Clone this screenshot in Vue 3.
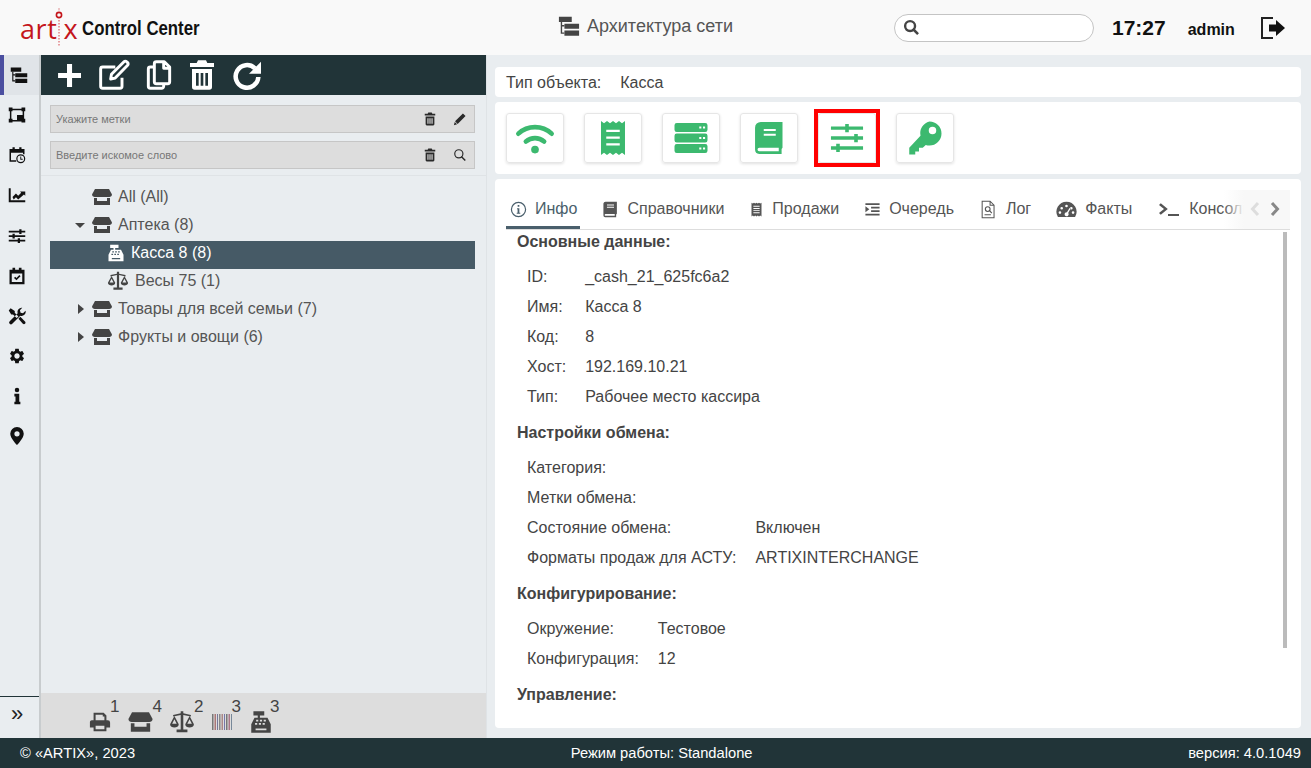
<template>
  <div class="page">
    <header class="top">
      <div class="brand">
        <div class="logo">
          <span class="logo-word">art</span>
          <svg class="logo-i" viewBox="0 0 12 40" width="12" height="40">
            <circle cx="6" cy="8" r="2.6" fill="none" stroke="#c4161c" stroke-width="1.6" />
            <line x1="6" y1="1" x2="6" y2="3.5" stroke="#e3a0a2" stroke-width="1.2" />
            <line x1="6" y1="13" x2="6" y2="39" stroke="#e07a7e" stroke-width="1.4" stroke-dasharray="1.5 1.5" />
          </svg>
          <span class="logo-word logo-x">x</span>
        </div>
        <span class="brand-name">Control Center</span>
      </div>
      <div class="page-title">
        <svg class="title-icon" viewBox="0 0 24 24" fill="currentColor" v-html="icons.tree"></svg>
        <span>Архитектура сети</span>
      </div>
      <div class="top-right">
        <div class="search">
          <svg viewBox="0 0 24 24" class="search-icon" v-html="icons.searchBold"></svg>
        </div>
        <span class="clock">17:27</span>
        <span class="user">admin</span>
        <svg class="exit" viewBox="0 0 26 24" v-html="icons.exit"></svg>
      </div>
    </header>

    <main class="main">
      <nav class="rail">
        <div class="rail-items">
          <div v-for="(item, i) in railItems" :key="item" class="rail-item" :class="{ active: i === 0 }">
            <svg viewBox="0 0 24 24" fill="currentColor" v-html="icons[item]"></svg>
          </div>
        </div>
        <div class="rail-toggle">»</div>
      </nav>

      <section class="tree-panel">
        <div class="toolbar">
          <svg v-for="item in toolbarItems" :key="item" viewBox="0 0 24 24" fill="currentColor" v-html="icons[item]"></svg>
        </div>
        <div class="filters">
          <div class="filter">
            <span>Укажите метки</span>
            <svg viewBox="0 0 24 24" fill="currentColor" v-html="icons.trash"></svg>
            <svg viewBox="0 0 24 24" fill="currentColor" v-html="icons.pencil"></svg>
          </div>
          <div class="filter">
            <span>Введите искомое слово</span>
            <svg viewBox="0 0 24 24" fill="currentColor" v-html="icons.trash"></svg>
            <svg viewBox="0 0 24 24" fill="currentColor" v-html="icons.searchThin"></svg>
          </div>
        </div>
        <ul class="tree">
          <li
            v-for="node in treeNodes"
            :key="node.label"
            class="tree-row"
            :class="[node.icon, { selected: node.selected, child: node.child }]"
          >
            <span v-if="!node.child" class="caret" :class="node.caret"></span>
            <svg viewBox="0 0 24 24" fill="currentColor" v-html="icons[node.icon]"></svg>
            <span>{{ node.label }}</span>
          </li>
        </ul>
        <div class="counters">
          <div v-for="c in counters" :key="c.icon" class="counter">
            <svg :style="{ width: c.w + 'px', marginRight: c.pull + 'px' }" viewBox="0 0 24 24" fill="currentColor" v-html="icons[c.icon]"></svg>
            <span>{{ c.count }}</span>
          </div>
        </div>
      </section>

      <section class="details">
        <div class="card type-card">
          <span>Тип объекта:</span>
          <span>Касса</span>
        </div>
        <div class="card tools">
          <div v-for="(tool, i) in tools" :key="tool" class="tool" :class="{ marked: i === 4 }">
            <svg viewBox="0 0 24 24" fill="currentColor" v-html="icons[tool]"></svg>
          </div>
        </div>
        <div class="card info-card">
          <div class="tabs">
            <div v-for="(tab, i) in tabs" :key="tab.label" class="tab" :class="{ active: i === 0 }">
              <svg :style="{ width: tab.w + 'px', height: tab.w + 'px' }" viewBox="0 0 24 24" fill="currentColor" v-html="icons[tab.icon]"></svg>
              <span>{{ tab.label }}</span>
            </div>
            <div class="tab-nav">
              <svg class="chev off" viewBox="0 0 10 16"><path d="M8 2L2.500 8 8 14" /></svg>
              <svg class="chev" viewBox="0 0 10 16"><path d="M2 2l5.500 6L2 14" /></svg>
            </div>
          </div>
          <div class="content">
            <div class="scrollbar"></div>
            <template v-for="group in groups" :key="group.title">
              <h3>{{ group.title }}</h3>
              <dl v-if="group.rows.length">
                <template v-for="row in group.rows" :key="row[0]">
                  <dt>{{ row[0] }}</dt>
                  <dd>{{ row[1] }}</dd>
                </template>
              </dl>
            </template>
          </div>
        </div>
      </section>
    </main>

    <footer class="bottom">
      <span>© «ARTIX», 2023</span>
      <span>Режим работы: Standalone</span>
      <span>версия: 4.0.1049</span>
    </footer>
  </div>
</template>

<script setup>
const icons = {
  tree: '<path d="M1 2h14v5.500H1zM7 9.500h16V15H7zM7 17h16v5.500H7z"/><path d="M3 7.500h1.500v3.500H7v1.500H4.500V19H7v1.500H3z"/>',
  frame: '<path fill-rule="evenodd" d="M1 2h5v1.500h12V2h5v5h-1.500v10H23v5h-5v-1.500H6V22H1v-5h1.500V7H1zm3.500 5v10H6v1.500h6V12h7.500V7H18V5.500H6V7z"/><path d="M14 14h5v4.500h-5z" opacity=".35"/>',
  calClock: '<path fill-rule="evenodd" d="M2 4h4V1.500h3V4h6V1.500h3V4h4v7h-2V9H4v10h7v2H2z"/><circle cx="17" cy="17" r="5.200" fill="none" stroke="currentColor" stroke-width="1.600"/><path d="M16.400 14h1.200v3h2v1.200h-3.200z"/>',
  chart: '<path d="M1 3h2.600v16H23v2.600H1z"/><path d="M6 14.500l4.600-4.600 3 3 4-4-1.600-1.600H23v5.800l-1.700-1.700-7.700 6.600-3-3-3 3z"/>',
  sliders: '<path d="M1 5h22v2.400H1zM1 11h22v2.400H1zM1 17h22v2.400H1z"/><path d="M15 3h3v6.400h-3zM6 9h3v6.400H6zM13 15h3v6.400h-3z"/>',
  calCheck: '<path fill-rule="evenodd" d="M6 1h3.500v2.500h5V1H18v2.500h4V23H2V3.500h4zM5 8.500v11.500h14V8.500zm4.600 4.400l1.700 1.700 3.800-3.800 1.600 1.600-5.400 5.400-3.300-3.300z"/>',
  tools: '<path d="M3.500 1.500l5.500 3.700v2.500l4.800 4.800-2.300 2.300-4.800-4.800H4.300L1 4.500zM19 1a5.500 5.500 0 0 0-6 7.300L2.300 19c-1.300 1.300-.9 2.500 0 3.400.9.900 2.100 1.200 3.400 0L16.400 11.600a5.500 5.500 0 0 0 7-6.600L20 8.400l-3.200-.9-.9-3.200z"/><path d="M14 15.500l2.400-2.400 6.300 6.300c.8.800.8 2.100 0 2.900s-2.100.8-2.900 0z"/>',
  gear: '<path fill-rule="evenodd" d="M19.140 12.940c.04-.3.06-.61.06-.94 0-.32-.02-.64-.07-.94l2.030-1.580c.18-.14.23-.41.12-.61l-1.920-3.320c-.12-.22-.37-.29-.59-.22l-2.390.96c-.5-.38-1.030-.7-1.620-.94l-.36-2.540c-.04-.24-.24-.41-.48-.41h-3.840c-.24 0-.43.17-.47.41l-.36 2.540c-.59.24-1.130.57-1.620.94l-2.390-.96c-.22-.08-.47 0-.59.22L2.740 8.870c-.12.21-.08.47.12.61l2.030 1.580c-.05.3-.09.63-.09.94s.02.64.07.94l-2.030 1.580c-.18.14-.23.41-.12.61l1.920 3.320c.12.22.37.29.59.22l2.390-.96c.5.38 1.030.7 1.620.94l.36 2.540c.05.24.24.41.48.41h3.840c.24 0 .44-.17.47-.41l.36-2.540c.59-.24 1.130-.56 1.620-.94l2.390.96c.22.08.47 0 .59-.22l1.920-3.320c.12-.22.07-.47-.12-.61l-2.010-1.580zM12 15.600c-1.980 0-3.600-1.620-3.600-3.600s1.620-3.600 3.600-3.600 3.600 1.620 3.600 3.600-1.620 3.600-3.600 3.600z"/>',
  infoI: '<circle cx="12" cy="4" r="3"/><path d="M8.500 9h6.500v10.500h1.500V23h-8v-3.500H10v-7H8.500z"/>',
  pin: '<path fill-rule="evenodd" d="M12 0a9 9 0 0 0-9 9c0 6 9 15 9 15s9-9 9-15a9 9 0 0 0-9-9zm0 5.500a3.500 3.500 0 1 1 0 7 3.500 3.500 0 0 1 0-7z"/>',
  plus: '<path d="M10.500 3.700h3.800v6.800H21v3.800h-6.700V21h-3.800v-6.700H3.800v-3.800h6.700z"/>',
  edit: '<path fill="none" stroke="currentColor" stroke-width="2.200" d="M18 14v6.500a1.500 1.500 0 0 1-1.500 1.500h-13A1.500 1.500 0 0 1 2 20.500v-13A1.500 1.500 0 0 1 3.500 6H13"/><path fill="none" stroke="currentColor" stroke-width="2.200" stroke-linejoin="round" d="M9.500 15l.6-3.500L19.500 2a1.400 1.400 0 0 1 2 0l.7.7a1.400 1.400 0 0 1 0 2l-9.300 9.600z"/>',
  copy: '<path fill="none" stroke="currentColor" stroke-width="2.200" stroke-linejoin="round" d="M10 2h6l4 4v11a1.500 1.500 0 0 1-1.500 1.500H10A1.500 1.500 0 0 1 8.500 17V3.500A1.500 1.500 0 0 1 10 2zM15.500 2v5H20M8.500 6H5.500A1.500 1.500 0 0 0 4 7.500v13A1.500 1.500 0 0 0 5.500 22H14a1.500 1.500 0 0 0 1.500-1.500v-2"/>',
  trash: '<path fill-rule="evenodd" d="M9 1h6l1 2h5v3H3V3h5zM4.500 7.500h15V21a2 2 0 0 1-2 2h-11a2 2 0 0 1-2-2zm3 3V20h2v-9.500zm3.500 0V20h2v-9.500zm3.500 0V20h2v-9.500z"/>',
  redo: '<path fill="none" stroke="currentColor" stroke-width="3.400" d="M18 7A8.500 8.500 0 1 0 20.500 13.500"/><path d="M22.500 2v9h-9z"/>',
  pencil: '<path d="M17 2.500l4.500 4.500L8 20.500l-4.500-4.500zM3 17l4 4-5.500 1.500z"/>',
  searchThin: '<circle cx="10" cy="10" r="7" fill="none" stroke="currentColor" stroke-width="2"/><path d="M15 13.500l7 7-1.800 1.800-7-7z"/>',
  searchBold: '<circle cx="10" cy="10" r="7" fill="none" stroke="#444" stroke-width="3.400"/><path fill="#444" d="M15 12.500l7.500 7.500-2.500 2.500-7.500-7.500z"/>',
  exit: '<path fill="none" stroke="#222" stroke-width="2" d="M13 2H2v20h11"/><path fill="#111" d="M9 8.500h7V4l9 8-9 8v-4.500H9z"/>',
  store: '<path d="M5 4h14l3 5.500c0 1.600-1.300 2.500-2.700 2.500H4.700C3.300 12 2 11.100 2 9.500z"/><path d="M4 13h3v3h10v-3h3v7H4z"/>',
  register: '<path fill-rule="evenodd" d="M5 2h10v4h-4v2h7l3 6v8H3v-8l3-6h3V6H5zM7.500 10v1.500h2V10zm3.500 0v1.500h2V10zm3.500 0v1.500h2V10zM6.500 13v1.500h2V13zm3.500 0v1.500h2V13zm3.500 0v1.500h2V13zM7 18v1.500h10V18z"/>',
  scale: '<path d="M10.800 2h2.400v2l7 1.500V7l-7-1.500V19H17v2.500H7V19h3.800V5.500L3.800 7V5.500l7-1.500z"/><path fill-rule="evenodd" d="M5 6.500l4 7.500c0 2-2 3-4 3s-4-1-4-3zm0 3L2.900 13.500h4.200zM19 6.500l4 7.500c0 2-2 3-4 3s-4-1-4-3zm0 3l-2.100 4h4.200z"/>',
  printer: '<path fill-rule="evenodd" d="M5 2h11l3 3v5h1.500A2.500 2.500 0 0 1 23 12.500V18h-4v4H5v-4H1v-6c0-1 1-2 2-2h2zm2.200 2.200V10h9.600V6H15V4.200zM7.200 16v3.800h9.600V16z"/>',
  barcode: '<path d="M2 4h1.500v16H2z" fill="#777"/><path d="M4.500 4H6v16H4.500z" fill="#a77"/><path d="M7 4h1v16H7z" fill="#779"/><path d="M9 4h1.500v16H9z" fill="#888"/><path d="M11.500 4H13v16h-1.500z" fill="#a88"/><path d="M14 4h1v16h-1z" fill="#77a"/><path d="M16 4h1.500v16H16z" fill="#777"/><path d="M18.500 4H20v16h-1.500z" fill="#a78"/><path d="M21 4h1v16h-1z" fill="#789"/>',
  wifi: '<g fill="none" stroke="currentColor" stroke-width="2.700" stroke-linecap="round"><path d="M2.500 9.500a14 14 0 0 1 19 0"/><path d="M6.800 14a8 8 0 0 1 10.400 0"/></g><circle cx="12" cy="18.600" r="2.200"/>',
  receipt: '<path fill-rule="evenodd" d="M4 .7l2 1.400L8 .7l2 1.400L12 .7l2 1.400L16 .7l2 1.400L20 .7v22.600l-2-1.400-2 1.400-2-1.400-2 1.400-2-1.400-2 1.400-2-1.400-2 1.400zM7.500 6.500V8h9V6.500zm0 4.500v1.500h9V11zm0 4.500V17h9v-1.500z"/>',
  server: '<path fill-rule="evenodd" d="M2.500 2h19A1.500 1.500 0 0 1 23 3.500v3A1.500 1.500 0 0 1 21.500 8h-19A1.500 1.500 0 0 1 1 6.500v-3A1.500 1.500 0 0 1 2.500 2zm15 2.300v1.400h1.400V4.300zm2.500 0v1.400h1.400V4.300zM2.500 9h19a1.500 1.500 0 0 1 1.500 1.500v3a1.500 1.500 0 0 1-1.500 1.500h-19A1.500 1.500 0 0 1 1 13.500v-3A1.500 1.500 0 0 1 2.500 9zm15 2.300v1.400h1.400v-1.400zm2.500 0v1.400h1.400v-1.400zM2.500 16h19a1.500 1.500 0 0 1 1.500 1.500v3a1.500 1.500 0 0 1-1.500 1.500h-19A1.500 1.500 0 0 1 1 20.500v-3A1.500 1.500 0 0 1 2.500 16zm15 2.300v1.400h1.400v-1.400zm2.500 0v1.400h1.400v-1.400z"/>',
  book: '<path fill-rule="evenodd" d="M6.500 1.300H21v17.200l-.6.8v3.400H5.500A3 3 0 0 1 2.700 19.700V5.100a3.800 3.800 0 0 1 3.800-3.800zM8.500 6v1.300h8V6zm0 3.200v1.300h8V9.200zM5.500 18.500a1.100 1.100 0 0 0 0 2.300h13v-2.300z"/>',
  slidersThin: '<path d="M1.300 4.250h21.400v2.200H1.300zM1.300 10.900h21.400v2.200H1.300zM1.300 17.550h21.400v2.200H1.300z"/><path d="M10.800 2.600h2.400v5.500h-2.400zM16.800 9.250h2.400v5.500h-2.400zM4.800 15.900h2.400v5.500H4.800z"/>',
  key: '<path fill-rule="evenodd" d="M15 1a8 8 0 0 1 0 16c-.9 0-1.700-.1-2.500-.4L10.500 18.500H8V21H5.500v2H1.500v-4.500l7.500-8A8 8 0 0 1 15 1zm2 3.500a2.500 2.500 0 1 0 0 5 2.500 2.500 0 0 0 0-5z"/>',
  infoCircle: '<circle cx="12" cy="12" r="10" fill="none" stroke="currentColor" stroke-width="1.700"/><path d="M10.800 5.800h2.400v2.400h-2.400zM10 10.200h3.200v6.400H14.500V18h-5v-1.400h1.200v-5H10z"/>',
  bookTab: '<path fill-rule="evenodd" d="M5 1h16v17l-1 1v4H4.500A2.500 2.500 0 0 1 2 20.500v-17A3 3 0 0 1 5 1zm2 4v1.500h10V5zm0 3v1.500h10V8zM5 18.500a1.200 1.200 0 0 0 0 2.400h13v-2.400z"/>',
  receiptTab: '<path fill-rule="evenodd" d="M4 1l2 1.500L8 1l2 1.500L12 1l2 1.500L16 1l2 1.500L20 1v22l-2-1.500-2 1.500-2-1.500-2 1.500-2-1.500L8 23l-2-1.500L4 23zM7 6v1.500h10V6zm0 3.500V11h10V9.500zm0 3.500v1.500h10V13zm0 3.500V18h10v-1.500z"/>',
  queue: '<path d="M2 3h20v2.600H2zM10 8h12v2.600H10zM10 13h12v2.600H10zM2 18h20v2.600H2zM2 7.500l5.500 4.200L2 16z"/>',
  log: '<path fill="none" stroke="currentColor" stroke-width="1.300" d="M4 1.500h10l5 5v16H4zM14 1.500v5h5"/><circle cx="11" cy="11.500" r="3" fill="none" stroke="currentColor" stroke-width="1.400"/><path d="M12.800 14l1.100-.9 2.800 3-1.100 1z"/><path d="M7 18h8v1.200H7z"/>',
  gauge: '<path fill-rule="evenodd" d="M12 3a11.500 11.500 0 0 1 9.800 17.500H2.200A11.500 11.500 0 0 1 12 3zM12 6.500a1.500 1.500 0 1 0 0 3 1.500 1.500 0 0 0 0-3zM6.500 9a1.500 1.500 0 1 0 0 3 1.500 1.500 0 0 0 0-3zM17.500 9a1.500 1.500 0 1 0 0 3 1.500 1.500 0 0 0 0-3zM4.500 14a1.500 1.500 0 1 0 0 3 1.500 1.500 0 0 0 0-3zM19.500 14a1.500 1.500 0 1 0 0 3 1.500 1.500 0 0 0 0-3zM15.500 10.200l-3 5a2.300 2.300 0 1 0 1.400.8l3-5.300z"/>',
  terminal: '<path d="M2 8l1.800-1.800 7 5.800-7 5.800L2 16l5-4z"/><path d="M11 17h11v2H11z"/>'
}

const railItems = ['tree', 'frame', 'calClock', 'chart', 'sliders', 'calCheck', 'tools', 'gear', 'infoI', 'pin']
const toolbarItems = ['plus', 'edit', 'copy', 'trash', 'redo']

const treeNodes = [
  { label: 'All (All)', icon: 'store', caret: 'none' },
  { label: 'Аптека (8)', icon: 'store', caret: 'down' },
  { label: 'Касса 8 (8)', icon: 'register', child: true, selected: true },
  { label: 'Весы 75 (1)', icon: 'scale', child: true },
  { label: 'Товары для всей семьи (7)', icon: 'store', caret: 'right' },
  { label: 'Фрукты и овощи (6)', icon: 'store', caret: 'right' }
]

const counters = [
  { icon: 'printer', count: 1, w: 22, pull: -1 },
  { icon: 'store', count: 4, w: 29, pull: -3 },
  { icon: 'scale', count: 2, w: 26, pull: -1 },
  { icon: 'barcode', count: 3, w: 24, pull: -3 },
  { icon: 'register', count: 3, w: 26, pull: -4 }
]

const tools = ['wifi', 'receipt', 'server', 'book', 'slidersThin', 'key']

const tabs = [
  { label: 'Инфо', icon: 'infoCircle', w: 17 },
  { label: 'Справочники', icon: 'bookTab', w: 17 },
  { label: 'Продажи', icon: 'receiptTab', w: 15 },
  { label: 'Очередь', icon: 'queue', w: 17 },
  { label: 'Лог', icon: 'log', w: 19 },
  { label: 'Факты', icon: 'gauge', w: 21 },
  { label: 'Консоль', icon: 'terminal', w: 24 }
]

const groups = [
  {
    title: 'Основные данные:',
    rows: [
      ['ID:', '_cash_21_625fc6a2'],
      ['Имя:', 'Касса 8'],
      ['Код:', '8'],
      ['Хост:', '192.169.10.21'],
      ['Тип:', 'Рабочее место кассира']
    ]
  },
  {
    title: 'Настройки обмена:',
    rows: [
      ['Категория:', ''],
      ['Метки обмена:', ''],
      ['Состояние обмена:', 'Включен'],
      ['Форматы продаж для АСТУ:', 'ARTIXINTERCHANGE']
    ]
  },
  {
    title: 'Конфигурирование:',
    rows: [
      ['Окружение:', 'Тестовое'],
      ['Конфигурация:', '12']
    ]
  },
  { title: 'Управление:', rows: [] }
]
</script>

<style>
html, body { margin: 0; height: 100%; overflow: hidden; }
</style>

<style scoped>
.page { width: 1311px; height: 768px; display: flex; flex-direction: column; font-family: "Liberation Sans", Arial, sans-serif; color: #444; background: #e9edf0; overflow: hidden; }

.top { height: 55px; flex: none; display: flex; align-items: center; background: #f9f9f9; }
.brand { display: flex; align-items: center; margin-left: 20px; width: 538px; }
.logo { display: flex; align-items: center; width: 62px; height: 50px; color: #c4161c; flex: none; }
.logo-word { font-family: "Open Sans", sans-serif; font-weight: 400; font-size: 27px; letter-spacing: .6px; line-height: 1; margin-top: 2px; }
.logo-i { flex: none; margin: -2px 0 0 -4px; }
.logo-x { margin-left: -2px; letter-spacing: 0; }
.brand-name { font-weight: 700; font-size: 21px; color: #111; transform: scaleX(.8); transform-origin: left center; white-space: nowrap; }
.page-title { display: flex; align-items: center; gap: 7px; width: 336px; font-size: 18px; color: #555; margin-top: -3px; }
.title-icon { width: 22px; height: 22px; color: #444; }
.top-right { display: flex; align-items: center; }
.search { width: 190px; height: 26px; border: 1px solid #c4c4c4; border-radius: 14px; background: #fff; display: flex; align-items: center; padding-left: 8px; }
.search-icon { width: 17px; height: 17px; }
.clock { font-weight: 700; font-size: 21px; color: #111; margin-left: 18px; }
.user { font-weight: 700; font-size: 16px; color: #111; margin-left: 22px; margin-top: 5px; }
.exit { width: 26px; height: 24px; margin-left: 25px; }

.main { flex: 1; display: flex; min-height: 0; }

.rail { width: 39px; flex: none; border-right: 2px solid #c8ccce; display: flex; flex-direction: column; justify-content: space-between; color: #111; }
.rail-item { height: 40.15px; display: flex; align-items: center; padding-left: 8px; box-sizing: border-box; }
.rail-item svg { width: 18px; height: 18px; }
.rail-item.active { background: #e0e4e8; border-left: 4px solid #4b4fa0; padding-left: 6px; }
.rail-toggle { height: 41px; border-top: 1px solid #213438; font-size: 22px; line-height: 33px; padding-left: 11px; color: #222; }

.tree-panel { width: 445px; flex: none; display: flex; flex-direction: column; border-right: 1px solid #dfe3e6; }
.toolbar { height: 40px; flex: none; background: #213438; color: #fff; display: flex; align-items: center; gap: 13px; padding-left: 12px; }
.toolbar svg { width: 32px; height: 32px; }
.toolbar svg:nth-child(4) { margin-left: -2px; }
.filters { padding: 10px 11px 6px 9px; display: flex; flex-direction: column; gap: 8px; border-bottom: 1px solid #dfe3e6; }
.filter { height: 28px; box-sizing: border-box; border: 1px solid #c6c6c6; background: #ddd; display: flex; align-items: center; padding: 0 7px 0 5px; font-size: 11px; color: #777; }
.filter span { flex: 1; }
.filter svg { width: 14px; height: 14px; color: #2a2a2a; }
.filter svg + svg { margin-left: 16px; }

.tree { list-style: none; margin: 9px 0 0; padding: 0; flex: 1; }
.tree-row { height: 28px; box-sizing: border-box; margin: 0 11px 0 9px; display: flex; align-items: center; font-size: 16px; color: #555; padding: 0 0 4px 24px; }
.tree-row svg { width: 24px; height: 24px; flex: none; margin-right: 4px; color: #444; }
.caret { width: 0; height: 0; flex: none; margin-right: 7px; border-style: solid; border-color: transparent; }
.caret.none { width: 9px; border-width: 0; }
.caret.down { border-width: 5px 5px 0; border-top-color: #444; margin-left: 1px; margin-right: 5px; }
.caret.right { border-width: 5px 0 5px 6px; border-left-color: #444; margin-left: 4px; margin-right: 6px; }
.tree-row.child { padding-left: 56px; }
.tree-row.child svg { width: 20px; height: 20px; margin-right: 5px; }
.tree-row.child.scale { padding-left: 57px; }
.tree-row.child.scale svg { width: 22px; height: 22px; margin-right: 6px; }
.tree-row.selected { background: #465a66; color: #fff; }
.tree-row.selected svg { color: #fff; }

.counters { height: 45px; flex: none; background: #ddd; display: flex; align-items: flex-start; padding-left: 48px; gap: 7px; color: #444; }
.counter { display: flex; align-items: flex-start; font-size: 17px; line-height: 1; }
.counter span { padding-top: 5px; }
.counter svg { height: 30px; margin-top: 14px; flex: none; }

.details { flex: 1; min-width: 0; display: flex; flex-direction: column; gap: 5px; padding: 12px 10px 10px 8px; }
.card { background: #fff; border-radius: 4px; }
.type-card { height: 30px; box-sizing: border-box; flex: none; display: flex; align-items: center; gap: 19px; padding: 1px 0 0 11px; font-size: 16px; color: #444; }
.tools { height: 72px; flex: none; display: flex; align-items: center; padding-left: 11px; gap: 20px; }
.tool { width: 58px; height: 50px; box-sizing: border-box; border: 1px solid #e6e6e6; border-radius: 3px; box-shadow: 0 1px 3px rgba(0, 0, 0, .12); display: flex; align-items: center; justify-content: center; color: #3cb96f; position: relative; }
.tool svg { width: 36px; height: 36px; }
.tool:first-child svg { width: 42px; height: 42px; }
.tool.marked::after { content: ""; position: absolute; inset: -5px -5px; border: 4px solid #f00; box-sizing: border-box; }

.info-card { flex: 1; min-height: 0; padding: 0 11px; overflow: hidden; }
.tabs { height: 51px; box-sizing: border-box; display: flex; align-items: flex-end; gap: 18px; border-bottom: 1px solid #ddd; width: 784px; overflow: hidden; position: relative; color: #555; }
.tab { display: flex; align-items: center; flex: none; gap: 8px; height: 30px; box-sizing: border-box; padding: 0 3px 7px 4px; font-size: 16px; border-bottom: 3px solid transparent; }
.tab svg { flex: none; }
.tab.active { color: #4a5f6c; border-bottom-color: #4a5f6c; }
.tab-nav { position: absolute; right: 0; top: 11px; height: 39px; width: 66px; background: linear-gradient(to right, rgba(248, 248, 248, 0), #f8f8f8 30%); display: flex; align-items: center; justify-content: flex-end; gap: 10px; padding-right: 10px; box-sizing: border-box; }
.chev { width: 10px; height: 16px; fill: none; stroke: #888; stroke-width: 3; margin-top: -2px; }
.chev.off { stroke: #ddd; }

.content { position: relative; height: 498px; overflow: hidden; padding-left: 11px; font-size: 16px; color: #444; }
.scrollbar { position: absolute; right: 3px; top: 2px; width: 4px; height: 416px; background: #bbb; }
h3 { margin: 2px 0 0; font-size: 16px; font-weight: 700; line-height: 20px; color: #444; }
dl { margin: 10px 0 11px 10px; display: grid; grid-template-columns: max-content 1fr; column-gap: 19px; grid-auto-rows: 30px; align-items: center; }
dt, dd { margin: 0; }

.bottom { height: 30px; flex: none; background: #213438; color: #fff; display: flex; align-items: center; justify-content: space-between; padding: 0 10px 0 20px; font-size: 14.7px; }
</style>
